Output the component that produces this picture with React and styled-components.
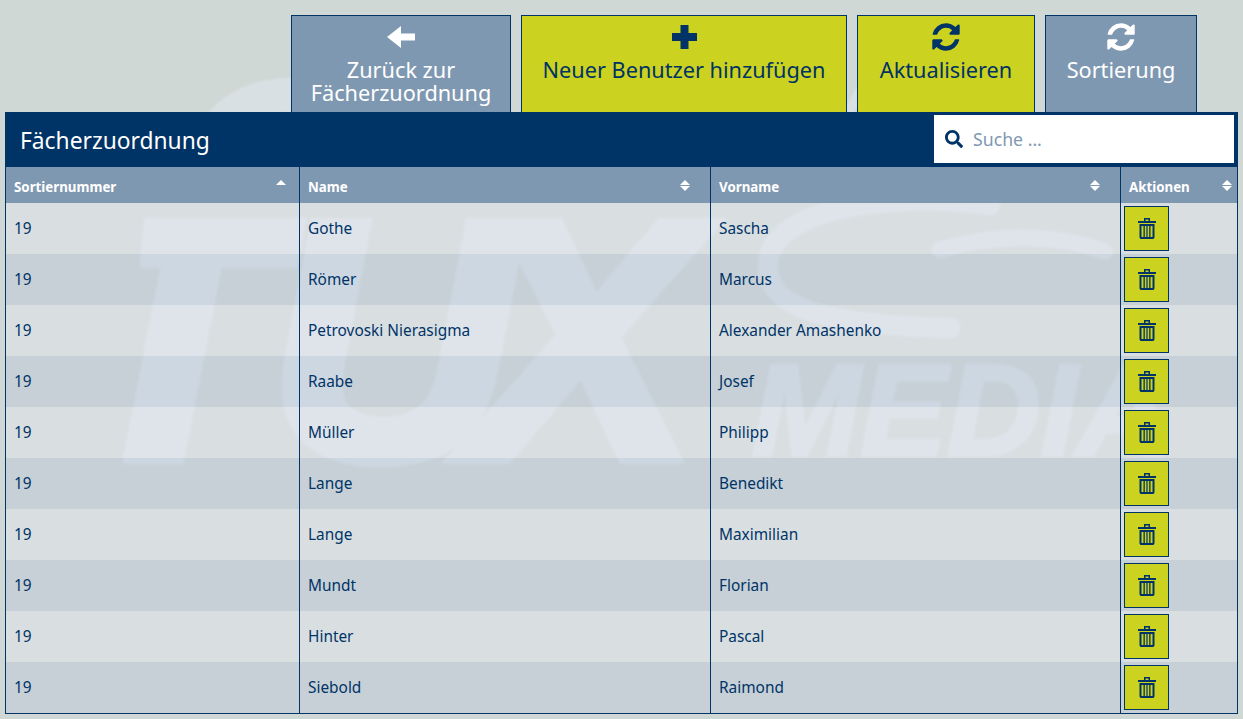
import styled, { createGlobalStyle } from 'styled-components';
import { FaSearch } from 'react-icons/fa';

const NAVY = '#003366';
const STEEL = '#7f98b2';
const LIME = '#cbd21f';
const MARK = '#d9e0e3';
const FONT = '"Noto Sans", "Open Sans", sans-serif';

const GlobalStyle = createGlobalStyle`
    html, body {
        margin: 0;
        padding: 0;
        background: #d0d8d5;
    }
    body {
        font-family: ${FONT};
        color: ${NAVY};
    }
`;

const Page = styled.div`
    position: relative;
    width: 1243px;
    height: 719px;
    overflow: hidden;
    box-sizing: border-box;
    padding: 15px 5px 0;
`;

const Watermark = styled.svg`
    position: absolute;
    left: 0;
    top: 0;
    width: 1243px;
    height: 719px;
    pointer-events: none;
`;

const Toolbar = styled.div`
    position: relative;
    display: flex;
    justify-content: flex-end;
    gap: 10px;
    padding-right: 41px;
    height: 97px;
`;

const ActionButton = styled.button`
    box-sizing: border-box;
    width: ${(p) => p.$width}px;
    height: 97px;
    display: flex;
    flex-direction: column;
    align-items: center;
    padding: 4px 0 0;
    border: 1px solid ${NAVY};
    border-bottom: 0;
    background: ${(p) => (p.$lime ? LIME : STEEL)};
    color: ${(p) => (p.$lime ? NAVY : '#fff')};
    font-family: ${FONT};
    font-size: 21.7px;
    line-height: 23px;
`;

const IconSlot = styled.span`
    height: 33px;
    margin-bottom: 5px;
    display: flex;
    align-items: center;
    justify-content: center;
`;

const Panel = styled.section`
    position: relative;
    width: 1233px;
    box-sizing: border-box;
    border: 1px solid ${NAVY};
    border-top: 0;
`;

const PanelHead = styled.header`
    box-sizing: border-box;
    height: 55px;
    margin: 0 -1px;
    background: ${NAVY};
    display: flex;
    align-items: flex-start;
    justify-content: space-between;
    padding: 3px 4px 0 15px;
`;

const PanelTitle = styled.h1`
    margin: 10px 0 0;
    color: #fff;
    font-size: 22.8px;
    line-height: 32px;
    font-weight: 400;
`;

const SearchBox = styled.label`
    width: 300px;
    height: 48px;
    background: #fff;
    display: flex;
    align-items: center;
    gap: 10px;
    padding-left: 11px;
    box-sizing: border-box;
    font-size: 18px;
`;

const SearchInput = styled.input`
    flex: 1;
    min-width: 0;
    border: 0;
    outline: 0;
    padding: 0;
    background: transparent;
    font-family: ${FONT};
    font-size: 17.7px;
    color: ${NAVY};

    &::placeholder {
        color: ${STEEL};
        opacity: 1;
    }
`;

const Table = styled.table`
    width: 1231px;
    table-layout: fixed;
    border-collapse: separate;
    border-spacing: 0;
`;

const HeadCell = styled.th`
    height: 36px;
    box-sizing: border-box;
    padding: 3px 8px 0;
    background: ${STEEL};
    color: #fff;
    font-size: 13.3px;
    font-weight: 700;
    text-align: left;
    border-left: ${(p) => (p.$first ? '0' : `1px solid ${NAVY}`)};
`;

const HeadInner = styled.div`
    display: flex;
    align-items: center;
    justify-content: space-between;
`;

const SortMark = styled.span`
    display: flex;
    flex-direction: column;
    height: 11px;
    gap: 1px;
    margin: -2px ${(p) => p.$right}px 0 0;

    &::before {
        content: '';
        border: 5px solid transparent;
        border-top: 0;
        border-bottom: 5px solid #fff;
    }
    &::after {
        content: '';
        display: ${(p) => (p.$asc ? 'none' : 'block')};
        border: 5px solid transparent;
        border-bottom: 0;
        border-top: 5px solid #fff;
    }
`;

const Row = styled.tr`
    background: ${(p) => (p.$odd ? 'rgba(238, 239, 255, 0.3)' : 'rgba(160, 180, 220, 0.2)')};
`;

const Cell = styled.td`
    height: 51px;
    box-sizing: border-box;
    padding: 0 8px;
    font-size: 15.4px;
    color: ${NAVY};
    border-left: ${(p) => (p.$first ? '0' : `1px solid ${NAVY}`)};
`;

const ActionCell = styled(Cell)`
    padding: 3px;
`;

const DeleteButton = styled.button`
    width: 45px;
    height: 45px;
    display: flex;
    align-items: center;
    justify-content: center;
    padding: 0;
    background: ${LIME};
    border: 1px solid ${NAVY};
    color: ${NAVY};
`;

const ArrowIcon = () => (
    <svg width="28" height="22" viewBox="0 0 28 22">
        <polygon points="0,11 14,0 14,7.5 28,7.5 28,14.5 14,14.5 14,22" fill="currentColor" />
    </svg>
);

const PlusIcon = () => (
    <svg width="25" height="24" viewBox="0 0 25 24">
        <polygon points="8.5,0 16.5,0 16.5,8 25,8 25,16 16.5,16 16.5,24 8.5,24 8.5,16 0,16 0,8 8.5,8" fill="currentColor" />
    </svg>
);

const RefreshIcon = () => (
    <svg width="32" height="32" viewBox="0 0 1792 1792">
        <path
            fill="currentColor"
            d="M1639 1056q0 5-1 7-64 268-268 434.5t-478 166.5q-146 0-282.5-55t-243.5-157l-129 129q-19 19-45 19t-45-19-19-45v-448q0-26 19-45t45-19h448q26 0 45 19t19 45-19 45l-137 137q71 66 161 102t187 36q134 0 250-65t186-179q11-17 53-117 8-23 30-23h192q13 0 22.5 9.5t9.5 22.5zm25-800v448q0 26-19 45t-45 19h-448q-26 0-45-19t-19-45 19-45l138-138q-148-137-349-137-134 0-250 65t-186 179q-11 17-53 117-8 23-30 23h-199q-13 0-22.5-9.5t-9.5-22.5v-7q65-268 270-434.5t480-166.5q146 0 284 55.5t245 156.5l130-129q19-19 45-19t45 19 19 45z"
        />
    </svg>
);

const TrashIcon = () => (
    <svg width="18" height="21" viewBox="0 0 18 21">
        <path
            fill="currentColor"
            fillRule="evenodd"
            d="M6 0h6v3h6v2H0V3h6zM7.5 1.5v1.5h3V1.5zM1.5 6h15v13.5l-1 1.5h-13l-1-1.5zM3.5 8v11h2V8zM6.8 8v11h1.6V8zM9.6 8v11h1.6V8zM12.5 8v11h2V8z"
        />
    </svg>
);

const people = [
    ['Gothe', 'Sascha'],
    ['Römer', 'Marcus'],
    ['Petrovoski Nierasigma', 'Alexander Amashenko'],
    ['Raabe', 'Josef'],
    ['Müller', 'Philipp'],
    ['Lange', 'Benedikt'],
    ['Lange', 'Maximilian'],
    ['Mundt', 'Florian'],
    ['Hinter', 'Pascal'],
    ['Siebold', 'Raimond'],
];

export default function App() {
    return (
        <Page>
            <GlobalStyle />
            <Watermark viewBox="0 0 1243 719" aria-hidden="true">
                <defs>
                    <filter id="soft">
                        <feGaussianBlur stdDeviation="1.2" />
                    </filter>
                    <clipPath id="tee">
                        <polygon points="147,190 1243,190 1243,480 120,480" />
                    </clipPath>
                </defs>
                <g filter="url(#soft)">
                    <g fill={MARK} stroke={MARK} fontFamily="Liberation Sans" fontWeight="700" fontStyle="italic">
                        <g clipPath="url(#tee)">
                            <text x="68" y="458" fontSize="340" strokeWidth="12">T</text>
                        </g>
                        <text x="268" y="458" fontSize="340" strokeWidth="12">U</text>
                        <text x="470" y="458" fontSize="340" strokeWidth="12">X</text>
                        <text x="752" y="455" fontSize="130" strokeWidth="3">MEDIA</text>
                    </g>
                    <g fill="none" stroke={MARK} strokeLinecap="round">
                        <path d="M215 132 C240 95 290 85 340 105 C420 130 500 135 600 130" strokeWidth="34" />
                        <path d="M845 118 L862 88" strokeWidth="10" />
                        <path d="M990 205 C900 192 770 205 768 265 C766 310 830 325 950 328" strokeWidth="20" />
                        <path d="M940 250 C1000 232 1060 235 1105 252" strokeWidth="16" />
                    </g>
                </g>
            </Watermark>
            <Toolbar>
                <ActionButton $width={220}>
                    <IconSlot><ArrowIcon /></IconSlot>
                    <span>Zurück zur<br />Fächerzuordnung</span>
                </ActionButton>
                <ActionButton $width={326} $lime>
                    <IconSlot><PlusIcon /></IconSlot>
                    <span>Neuer Benutzer hinzufügen</span>
                </ActionButton>
                <ActionButton $width={178} $lime>
                    <IconSlot><RefreshIcon /></IconSlot>
                    <span>Aktualisieren</span>
                </ActionButton>
                <ActionButton $width={152}>
                    <IconSlot><RefreshIcon /></IconSlot>
                    <span>Sortierung</span>
                </ActionButton>
            </Toolbar>
            <Panel>
                <PanelHead>
                    <PanelTitle>Fächerzuordnung</PanelTitle>
                    <SearchBox>
                        <FaSearch />
                        <SearchInput placeholder="Suche ..." />
                    </SearchBox>
                </PanelHead>
                <Table>
                    <colgroup>
                        <col style={{ width: 293 }} />
                        <col style={{ width: 411 }} />
                        <col style={{ width: 410 }} />
                        <col style={{ width: 117 }} />
                    </colgroup>
                    <thead>
                        <tr>
                            <HeadCell $first>
                                <HeadInner>Sortiernummer<SortMark $asc $right={5} /></HeadInner>
                            </HeadCell>
                            <HeadCell><HeadInner>Name<SortMark $right={12} /></HeadInner></HeadCell>
                            <HeadCell><HeadInner>Vorname<SortMark $right={12} /></HeadInner></HeadCell>
                            <HeadCell><HeadInner>Aktionen<SortMark $right={-3} /></HeadInner></HeadCell>
                        </tr>
                    </thead>
                    <tbody>
                        {people.map(([name, first], i) => (
                            <Row key={i} $odd={i % 2 === 0}>
                                <Cell $first>19</Cell>
                                <Cell>{name}</Cell>
                                <Cell>{first}</Cell>
                                <ActionCell>
                                    <DeleteButton aria-label="Löschen"><TrashIcon /></DeleteButton>
                                </ActionCell>
                            </Row>
                        ))}
                    </tbody>
                </Table>
            </Panel>
        </Page>
    );
}
